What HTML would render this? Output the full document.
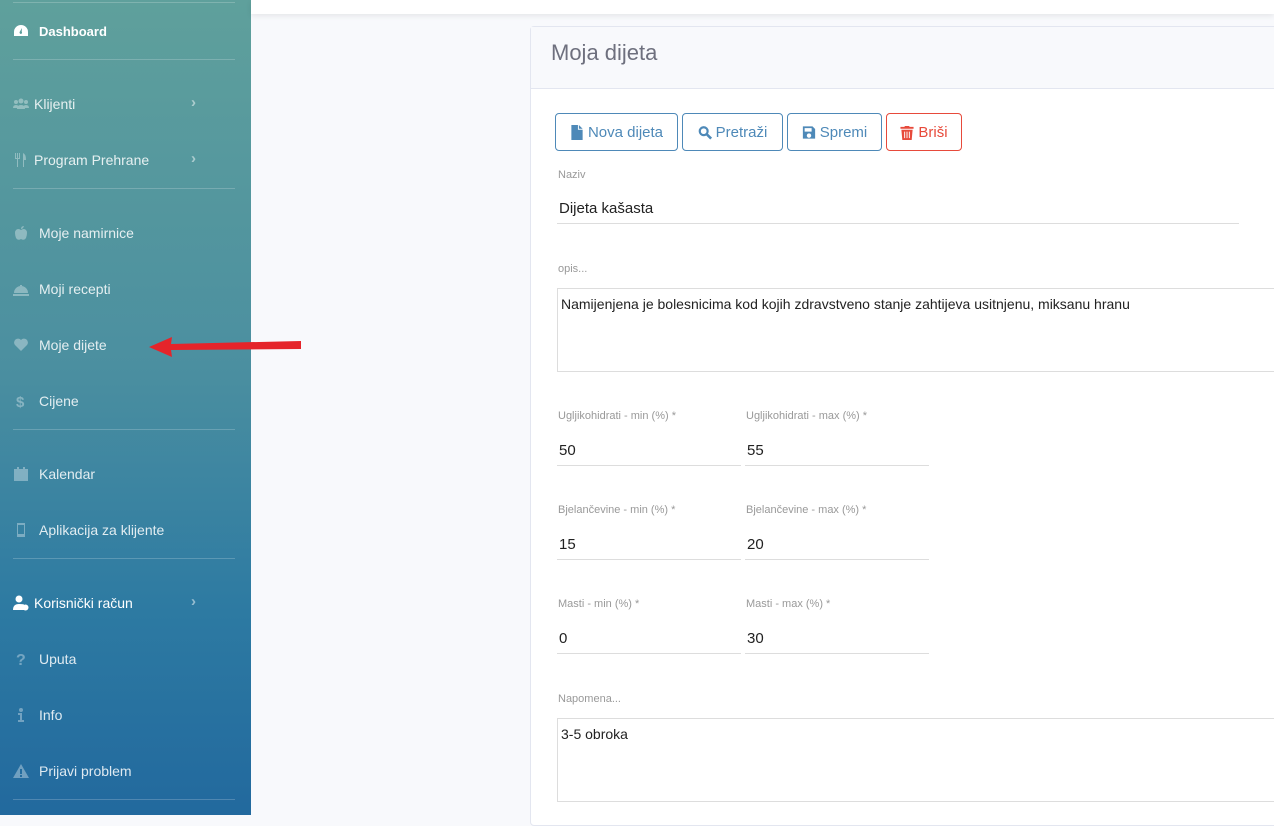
<!DOCTYPE html>
<html><head><meta charset="utf-8"><style>
*{box-sizing:border-box;margin:0;padding:0}
body{width:1274px;height:815px;overflow:hidden;background:#f8f9fc;font-family:"Liberation Sans",sans-serif;position:relative}
#sb{position:absolute;left:0;top:0;width:251px;height:815px;background:linear-gradient(180deg,#5fa09c 0%,#4b8fa0 45%,#2d7aa2 75%,#22699e 100%)}
.hr{position:absolute;left:13px;width:222px;height:1px;background:rgba(255,255,255,.2)}
.it{position:absolute;left:13px;color:rgba(255,255,255,.85);font-size:14px;display:flex;align-items:center;height:18px}
.it svg{width:16px;height:16px;margin-right:10px;fill:rgba(255,255,255,.35)}
.ch{position:absolute;left:191px;color:rgba(255,255,255,.5);font-size:15px;font-weight:bold}
#top{position:absolute;left:251px;top:0;width:1023px;height:14px;background:#fff;box-shadow:0 2px 6px rgba(0,0,0,.08)}
#card{position:absolute;left:530px;top:26px;width:760px;height:800px;background:#fff;border:1px solid #e3e6f0;border-radius:4px}
#hd{height:62px;background:#f8f9fc;border-bottom:1px solid #e3e6f0;padding:13px 20px;font-size:22px;color:#6e707e}
.btn{position:absolute;top:86px;height:38px;border:1px solid #4e89b8;border-radius:4px;color:#4e89b8;font-size:15px;display:flex;align-items:center;justify-content:center;gap:4px}
.btn svg{width:14px;height:15px;fill:currentColor}
.lb{position:absolute;font-size:11px;color:#999}
.v{position:absolute;font-size:15px;color:#222}
.ln{position:absolute;height:1px;background:#ddd}
.ta{position:absolute;border:1px solid #ddd;left:26px;width:740px}
</style></head><body>
<div id="sb">
<div class="hr" style="top:2px"></div>
<div class="it" style="top:22px;color:#fff;font-weight:bold;font-size:13px"><svg viewBox="0 0 16 16" style="fill:#fff"><path d="M8 2A7 7 0 0 0 1 9v4h14V9A7 7 0 0 0 8 2zm0 9a1.5 1.5 0 0 1-1-2.6L9 5l-.3 3.6A1.5 1.5 0 0 1 8 11z"/></svg>Dashboard</div>
<div class="hr" style="top:59px"></div>
<div class="it" style="top:95px"><svg viewBox="0 0 16 16" style="margin-right:5px"><circle cx="3" cy="6" r="2"/><circle cx="8" cy="5" r="2.5"/><circle cx="13" cy="6" r="2"/><path d="M0 12q0-3 3-3t3 3zM4 13q0-4 4-4t4 4zM10 12q0-3 3-3t3 3z"/></svg>Klijenti</div><div class="ch" style="top:94px">›</div>
<div class="it" style="top:151px"><svg viewBox="0 0 16 16" style="margin-right:5px"><path d="M2 1h1v5h1V1h1v5h1V1h1v6H5v8H4V7H2zM10 1q3 1 3 7h-2v7h-1z"/></svg>Program Prehrane</div><div class="ch" style="top:150px">›</div>
<div class="hr" style="top:188px"></div>
<div class="it" style="top:224px"><svg viewBox="0 0 16 16"><path d="M8 5q3-2 5 0t0 8q-2 3-5 1-3 2-5-1-2-6 0-8t5 0zM8 4q0-3 3-3-1 3-3 3z"/></svg>Moje namirnice</div>
<div class="it" style="top:280px"><svg viewBox="0 0 16 16"><path d="M1 12a7 7 0 0 1 14 0zM0 13h16v2H0zM7 4h2v1H7z"/></svg>Moji recepti</div>
<div class="it" style="top:336px"><svg viewBox="0 0 16 16"><path d="M8 14L2 8a3.5 3.5 0 0 1 6-5 3.5 3.5 0 0 1 6 5z"/></svg>Moje dijete</div>
<div class="it" style="top:392px"><svg viewBox="0 0 16 16"><text x="3" y="14" font-size="15" font-weight="bold" fill="rgba(255,255,255,.35)">$</text></svg>Cijene</div>
<div class="hr" style="top:429px"></div>
<div class="it" style="top:465px"><svg viewBox="0 0 16 16"><path d="M1 3h14v12H1zM4 1h2v3H4zM10 1h2v3h-2z"/></svg>Kalendar</div>
<div class="it" style="top:521px"><svg viewBox="0 0 16 16"><path d="M4 1h8v14H4zM5 3v9h6V3z"/></svg>Aplikacija za klijente</div>
<div class="hr" style="top:558px"></div>
<div class="it" style="top:594px;color:#fff"><svg viewBox="0 0 16 16" style="fill:#fff;margin-right:5px"><circle cx="6" cy="4" r="3.5"/><path d="M0 15q0-6 6-6t5 1v5z"/><circle cx="12.5" cy="12.5" r="3"/></svg>Korisnički račun</div><div class="ch" style="top:593px">›</div>
<div class="it" style="top:650px"><svg viewBox="0 0 16 16"><text x="3" y="14" font-size="16" font-weight="bold" fill="rgba(255,255,255,.35)">?</text></svg>Uputa</div>
<div class="it" style="top:706px"><svg viewBox="0 0 16 16"><circle cx="8" cy="3" r="2"/><path d="M5 6h4v7h2v2H5v-2h2V8H5z"/></svg>Info</div>
<div class="it" style="top:762px"><svg viewBox="0 0 16 16"><path d="M8 1l8 14H0zM7 6v5h2V6zM7 12v2h2v-2z"/></svg>Prijavi problem</div>
<div class="hr" style="top:799px"></div>
</div>
<div id="top"></div>
<svg style="position:absolute;left:145px;top:330px" width="160" height="30"><polygon points="4,17 27,7 26,14 156,11 156,19 26,20 27,27" fill="#e5242a"/></svg>
<div id="card">
<div id="hd">Moja dijeta</div>
<div class="btn" style="left:24px;width:123px"><svg viewBox="0 0 12 16"><path d="M0 0h7v5h5v11H0zM8 0l4 4H8z"/></svg>Nova dijeta</div>
<div class="btn" style="left:151px;width:101px"><svg viewBox="0 0 16 16"><circle cx="6.5" cy="6.5" r="4.5" fill="none" stroke="currentColor" stroke-width="2.5"/><path d="M10 10l5 5" stroke="currentColor" stroke-width="3"/></svg>Pretraži</div>
<div class="btn" style="left:256px;width:95px"><svg viewBox="0 0 16 16"><path d="M1 1h11l3 3v11H1zM3 3v4h8V3zM8 9a2.5 2.5 0 1 0 .01 0z"/></svg>Spremi</div>
<div class="btn" style="left:355px;width:76px;border-color:#e74a3b;color:#e74a3b"><svg viewBox="0 0 14 16"><path d="M0 2h4l1-1h4l1 1h4v2H0zM1 5h12l-1 11H2zM4 7v7h1V7zM6.5 7v7h1V7zM9 7v7h1V7z"/></svg>Briši</div>
<div class="lb" style="left:27px;top:142px">Naziv</div>
<div class="v" style="left:28px;top:173px">Dijeta kašasta</div>
<div class="ln" style="left:26px;top:196px;width:682px"></div>
<div class="lb" style="left:27px;top:236px">opis...</div>
<div class="ta" style="top:261px;height:84px"><div class="v" style="left:3px;top:7px;font-size:14px">Namijenjena je bolesnicima kod kojih zdravstveno stanje zahtijeva usitnjenu, miksanu hranu</div></div>
<div class="lb" style="left:27px;top:383px">Ugljikohidrati - min (%) *</div><div class="lb" style="left:215px;top:383px">Ugljikohidrati - max (%) *</div>
<div class="v" style="left:28px;top:415px">50</div><div class="v" style="left:216px;top:415px">55</div>
<div class="ln" style="left:26px;top:438px;width:184px"></div><div class="ln" style="left:214px;top:438px;width:184px"></div>
<div class="lb" style="left:27px;top:477px">Bjelančevine - min (%) *</div><div class="lb" style="left:215px;top:477px">Bjelančevine - max (%) *</div>
<div class="v" style="left:28px;top:509px">15</div><div class="v" style="left:216px;top:509px">20</div>
<div class="ln" style="left:26px;top:532px;width:184px"></div><div class="ln" style="left:214px;top:532px;width:184px"></div>
<div class="lb" style="left:27px;top:571px">Masti - min (%) *</div><div class="lb" style="left:215px;top:571px">Masti - max (%) *</div>
<div class="v" style="left:28px;top:603px">0</div><div class="v" style="left:216px;top:603px">30</div>
<div class="ln" style="left:26px;top:626px;width:184px"></div><div class="ln" style="left:214px;top:626px;width:184px"></div>
<div class="lb" style="left:27px;top:666px">Napomena...</div>
<div class="ta" style="top:691px;height:84px"><div class="v" style="left:3px;top:7px;font-size:14px">3-5 obroka</div></div>
</div>
</body></html>
